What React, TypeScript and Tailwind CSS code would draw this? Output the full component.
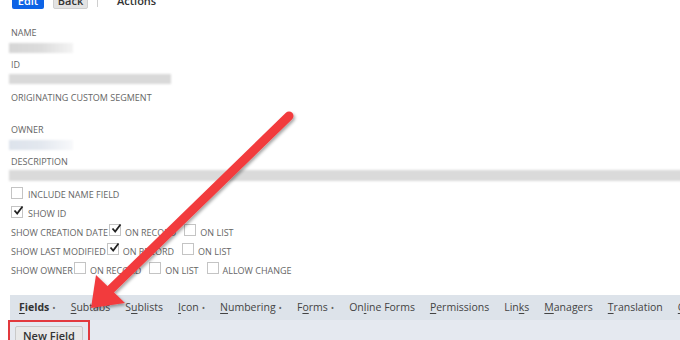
import React from "react";

const Box = ({ checked = false }: { checked?: boolean }) => (
  <span className="relative inline-block w-[12px] h-[12px] border border-[#c4c4c4] bg-white shrink-0">
    {checked && (
      <svg className="absolute left-[1px] top-[-2px]" width="11" height="11" viewBox="0 0 11 11">
        <path d="M1.5 5.5 L4.2 8.5 L9.5 1.5" fill="none" stroke="#222" strokeWidth="1.8" />
      </svg>
    )}
  </span>
);

const Label = ({ children, className = "" }: { children: React.ReactNode; className?: string }) => (
  <div className={`h-[12px] leading-[12px] text-[9px] text-[#666] uppercase ml-[11px] ${className}`}>{children}</div>
);

const Bar = ({ w, color, className = "" }: { w: string; color: string; className?: string }) => (
  <div className={`ml-[9px] ${w} ${className} ${color} blur-[1px]`} />
);

const Tab = ({ pre, u, post, dot = false, bold = false }: { pre: string; u: string; post: string; dot?: boolean; bold?: boolean }) => (
  <span className={`whitespace-nowrap ${bold ? "font-bold text-[#333]" : "text-[#444]"}`}>
    {pre}
    <span className="underline underline-offset-2">{u}</span>
    {post}
    {dot && <span className="text-[#666] text-[9px] ml-[3px] font-normal">•</span>}
  </span>
);

export default function App() {
  return (
    <div
      className="relative w-[680px] h-[340px] overflow-hidden bg-white"
      style={{ fontFamily: '"Open Sans", "Liberation Sans", sans-serif' }}
    >
      {/* top action row */}
      <div className="-mt-[7px] h-[17px] flex items-start">
        <div className="ml-[12px] w-[32px] h-[16px] rounded-[2px] bg-[#0d63e6] text-white text-[11px] font-semibold leading-[10px] flex items-end justify-center pb-[3px]">Edit</div>
        <div className="ml-[9px] w-[35px] h-[16px] rounded-[2px] bg-[#e3e3e3] border border-[#cfcfcf] text-[#333] text-[11px] font-semibold leading-[10px] flex items-end justify-center pb-[2px]">Back</div>
        <div className="ml-[9px] w-px h-[14px] bg-[#cfcfcf]" />
        <div className="ml-[19px] h-[14px] text-[11px] text-[#333] font-semibold leading-[10px] flex items-end pb-[1px]">Actions</div>
      </div>

      <Label className="mt-[17px]">Name</Label>
      <Bar w="w-[64px]" className="mt-[4px] h-[10px]" color="bg-gradient-to-r from-[#d6d6d6] via-[#dcdcdc] to-[#f4f4f4]" />
      <Label className="mt-[6px]">ID</Label>
      <Bar w="w-[162px]" className="mt-[3px] h-[10px]" color="bg-[#d9d9d9]" />
      <Label className="mt-[8px]">Originating Custom Segment</Label>
      <Label className="mt-[20px]">Owner</Label>
      <Bar w="w-[64px]" className="mt-[4px] h-[10px]" color="bg-gradient-to-r from-[#dde3ec] via-[#e3e8ef] to-[#f8f9fb]" />
      <Label className="mt-[6px]">Description</Label>
      <Bar w="w-[680px]" className="mt-[2px] h-[11px]" color="bg-[#dadada]" />

      <div className="mt-[4px] ml-[11px] text-[9px] text-[#666] uppercase">
        <div className="h-[19px] flex items-center gap-[5px]">
          <span className="-mt-[3px] flex"><Box /></span>
          <span>Include Name Field</span>
        </div>
        <div className="h-[19px] flex items-center gap-[5px]">
          <span className="-mt-[3px] flex"><Box checked /></span>
          <span>Show ID</span>
        </div>
        <div className="h-[19px] flex items-center">
          <span>Show Creation Date</span>
          <span className="-mt-[6px] ml-[1px] flex"><Box checked /></span>
          <span className="ml-[4px]">On Record</span>
          <span className="-mt-[6px] ml-[8px] flex"><Box /></span>
          <span className="ml-[4px]">On List</span>
        </div>
        <div className="h-[19px] flex items-center">
          <span>Show Last Modified</span>
          <span className="-mt-[6px] ml-[1px] flex"><Box checked /></span>
          <span className="ml-[4px]">On Record</span>
          <span className="-mt-[6px] ml-[8px] flex"><Box /></span>
          <span className="ml-[4px]">On List</span>
        </div>
        <div className="h-[19px] flex items-center">
          <span>Show Owner</span>
          <span className="-mt-[6px] ml-[1px] flex"><Box /></span>
          <span className="ml-[4px]">On Record</span>
          <span className="-mt-[6px] ml-[8px] flex"><Box /></span>
          <span className="ml-[4px]">On List</span>
          <span className="-mt-[6px] ml-[8px] flex"><Box /></span>
          <span className="ml-[4px]">Allow Change</span>
        </div>
      </div>

      {/* tabs */}
      <div className="mt-[15px] ml-[10px]">
        <div className="h-[25px] bg-[#dde3ea] flex items-center gap-[15px] pl-[9px] text-[10.5px] whitespace-nowrap">
          <Tab pre="" u="F" post="ields" dot bold />
          <Tab pre="" u="S" post="ubtabs" />
          <Tab pre="S" u="u" post="blists" />
          <Tab pre="" u="I" post="con" dot />
          <Tab pre="" u="N" post="umbering" dot />
          <Tab pre="F" u="o" post="rms" dot />
          <Tab pre="On" u="l" post="ine Forms" />
          <Tab pre="" u="P" post="ermissions" />
          <Tab pre="Lin" u="k" post="s" />
          <Tab pre="" u="M" post="anagers" />
          <Tab pre="" u="T" post="ranslation" />
          <Tab pre="" u="G" post="lobal" />
        </div>
        <div className="h-[30px] bg-[#e5e9f0] pt-[2px] pl-[5px]">
          <div className="relative inline-block">
            <div className="h-[20px] px-[7px] bg-[#e8e8e8] border border-[#c9c9c9] rounded-[2px] text-[11px] font-semibold text-[#333] leading-[18px]">New Field</div>
            <div className="absolute -left-[7px] -top-[6px] w-[82px] h-[30px] border-2 border-[#e2393d]" />
          </div>
        </div>
      </div>

      {/* annotation arrow */}
      <svg className="absolute left-0 top-0 pointer-events-none" width="680" height="340" viewBox="0 0 680 340">
        <defs>
          <filter id="sh" x="-20%" y="-20%" width="140%" height="140%">
            <feDropShadow dx="1.5" dy="2" stdDeviation="1.5" floodColor="#000" floodOpacity="0.35" />
          </filter>
        </defs>
        <g filter="url(#sh)">
          <line x1="289" y1="116" x2="110" y2="290" stroke="#f23b3e" strokeWidth="9" strokeLinecap="round" />
          <polygon points="91,308 96,275 125,303" fill="#f23b3e" />
        </g>
      </svg>
    </div>
  );
}
